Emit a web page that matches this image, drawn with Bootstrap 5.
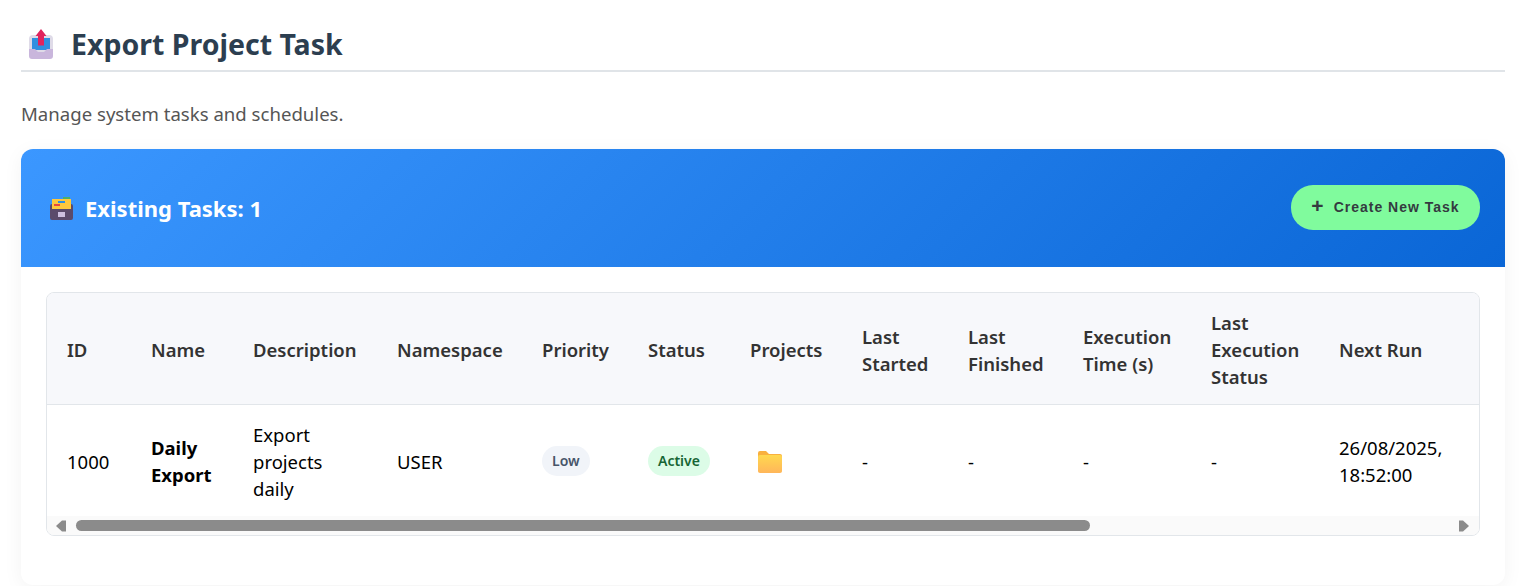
<!DOCTYPE html>
<html lang="en">
<head>
<meta charset="utf-8">
<title>Export Project Task</title>
<link href="https://cdn.jsdelivr.net/npm/bootstrap@5.3.0/dist/css/bootstrap.min.css" rel="stylesheet">
<style>
html,body{height:586px;overflow:hidden}
body{font-family:"Noto Sans","Open Sans",sans-serif;color:#212529;background:#fff;padding:0 28px 0 21px}
.page-head{height:72px;border-bottom:2px solid #e0e4e8;gap:18px;padding:18px 0 0 8px}
.page-head h1{font-size:28.5px;font-weight:700;color:#2c3e50;margin:0;line-height:1.2}
.page-sub{font-size:18.6px;line-height:27px;color:#555;margin:28px 0 22px}
.task-panel{border-radius:12px;box-shadow:0 4px 20px rgba(0,0,0,.05);background:#fff;height:436px;overflow:hidden}
.panel-top{height:118px;padding:0 25px 0 28px;background:linear-gradient(135deg,#3b97ff,#0a66d6);color:#fff}
.panel-top h2{font-size:22px;font-weight:700;margin:1px 0 0;line-height:1.2;gap:11px}
.new-task{background:#80fb9d;color:#343a40;border:0;border-radius:22px;height:45px;width:189px;margin-bottom:1px;font-family:"Liberation Sans",sans-serif;font-size:14px;font-weight:700;letter-spacing:1px;gap:10px;padding:0}
.new-task:hover{background:#80fb9d;color:#343a40}
.plus-mark{font-size:21px;line-height:1;letter-spacing:0;position:relative;top:-2px}
.panel-main{padding:25px}
.table-shell{border:1px solid #e2e6ea;border-radius:8px;overflow:hidden}
.table-clip{overflow:hidden}
.fake-scroll{height:19px;background:#fafafa;padding:0 10px 0 9px}
.scroll-thumb{flex:0 0 1014px;height:11px;margin-left:10px;background:#8b8b8b;border-radius:6px}
.arrow-r{margin-left:auto}
.task-table{table-layout:fixed;width:1940px;margin:0;font-size:18.5px;line-height:27px;--bs-table-bg:transparent}
.task-table th,.task-table td{padding:16px 20px 14px;vertical-align:middle;border-bottom:0}
.task-table td.cell-pair{padding:15px 20px}
.task-table thead th{background:#f7f8fb;font-weight:600;color:#333;border-bottom:1px solid #e2e6ea}
.task-table td{color:#000;height:111px}
.task-name{font-weight:700}
.state-pill{display:inline-block;font-size:14px;font-weight:600;line-height:20px;padding:5px 10px;border-radius:15px;vertical-align:6px}
.state-low{background:#f1f4f9;color:#475569}
.state-on{background:#dcfce7;color:#166534}
.folder-mark{vertical-align:-4px}
.w-id{width:84px}.w-name{width:102px}.w-desc{width:144px}.w-ns{width:145px}.w-pri{width:106px}.w-st{width:102px}.w-pr{width:112px}.w-ls{width:106px}.w-lf{width:115px}.w-ex{width:128px}.w-le{width:128px}.w-nr{width:146px}.w-end{width:522px}
</style>
</head>
<body>
<header class="page-head d-flex align-items-center">
  <svg width="24" height="30" viewBox="0 0 24 30" aria-hidden="true">
    <path d="M4 6h16a4 4 0 0 1 4 4v16H0V10a4 4 0 0 1 4-4z" fill="#dfdbe8"/>
    <path d="M3 9h18v11a1 1 0 0 1-1 1H4a1 1 0 0 1-1-1z" fill="#2f8fe0"/>
    <path d="M0 20h6l3 3h6l3-3h6v7a3 3 0 0 1-3 3H3a3 3 0 0 1-3-3z" fill="#c9b6dc"/>
    <path d="M12 0l5.500 7H15v9.500H9V7H6.500z" fill="#e0245e"/>
  </svg>
  <h1>Export Project Task</h1>
</header>
<p class="page-sub">Manage system tasks and schedules.</p>
<section class="task-panel">
  <div class="panel-top d-flex align-items-center justify-content-between">
    <h2 class="d-flex align-items-center">
      <svg width="25" height="24" viewBox="0 0 25 24" aria-hidden="true">
        <path d="M14 1h7v4h-7z" fill="#4caf6a"/>
        <path d="M3 3h19v11H3z" fill="#ffc83d"/>
        <path d="M9 5h7v2H9z" fill="#2f8fe0"/>
        <path d="M5 8h6v2H5z" fill="#e8483f"/>
        <path d="M1 10a2 2 0 0 1 2-2v5h19V8a2 2 0 0 1 2 2v12a2 2 0 0 1-2 2H3a2 2 0 0 1-2-2z" fill="#5b4a6b"/>
        <path d="M9 16h7v5H9z" fill="#cdbfe0"/>
      </svg>
      <span>Existing Tasks: 1</span>
    </h2>
    <button type="button" class="btn new-task d-flex align-items-center justify-content-center"><span class="plus-mark">+</span><span>Create New Task</span></button>
  </div>
  <div class="panel-main">
    <div class="table-shell">
      <div class="table-clip">
      <table class="table task-table">
        <colgroup><col class="w-id"><col class="w-name"><col class="w-desc"><col class="w-ns"><col class="w-pri"><col class="w-st"><col class="w-pr"><col class="w-ls"><col class="w-lf"><col class="w-ex"><col class="w-le"><col class="w-nr"><col class="w-end"></colgroup>
        <thead><tr><th>ID</th><th>Name</th><th>Description</th><th>Namespace</th><th>Priority</th><th>Status</th><th>Projects</th><th>Last Started</th><th>Last Finished</th><th>Execution Time (s)</th><th>Last Execution Status</th><th>Next Run</th><th></th></tr></thead>
        <tbody><tr>
          <td>1000</td><td class="task-name cell-pair">Daily Export</td><td>Export projects daily</td><td>USER</td>
          <td><span class="state-pill state-low">Low</span></td>
          <td><span class="state-pill state-on">Active</span></td>
          <td><svg class="folder-mark ms-2" width="24" height="22" viewBox="0 0 24 22" aria-hidden="true"><defs><linearGradient id="fg" x1="0" y1="0" x2="0" y2="1"><stop offset="0" stop-color="#ffd84f"/><stop offset="1" stop-color="#ffb65a"/></linearGradient></defs><path d="M2 0h6l3 3h11a2 2 0 0 1 2 2v14a2 2 0 0 1-2 2H2a2 2 0 0 1-2-2V2a2 2 0 0 1 2-2z" fill="#f9b03f"/><path d="M0 6a2 2 0 0 1 2-2h20a2 2 0 0 1 2 2v14a2 2 0 0 1-2 2H2a2 2 0 0 1-2-2z" fill="url(#fg)"/></svg></td>
          <td>-</td><td>-</td><td>-</td><td>-</td><td class="cell-pair">26/08/2025, 18:52:00</td><td></td>
        </tr></tbody>
      </table>
      </div>
      <div class="fake-scroll d-flex align-items-center" aria-hidden="true">
        <svg width="10" height="12" viewBox="0 0 10 12"><path d="M0 6L6 0.500h4v11H6z" fill="#8b8b8b"/></svg>
        <span class="scroll-thumb"></span>
        <svg class="arrow-r" width="10" height="12" viewBox="0 0 10 12"><path d="M10 6L4 0.500H0v11h4z" fill="#8b8b8b"/></svg>
      </div>
    </div>
  </div>
</section>
<script src="https://cdn.jsdelivr.net/npm/bootstrap@5.3.0/dist/js/bootstrap.bundle.min.js"></script>
</body>
</html>
